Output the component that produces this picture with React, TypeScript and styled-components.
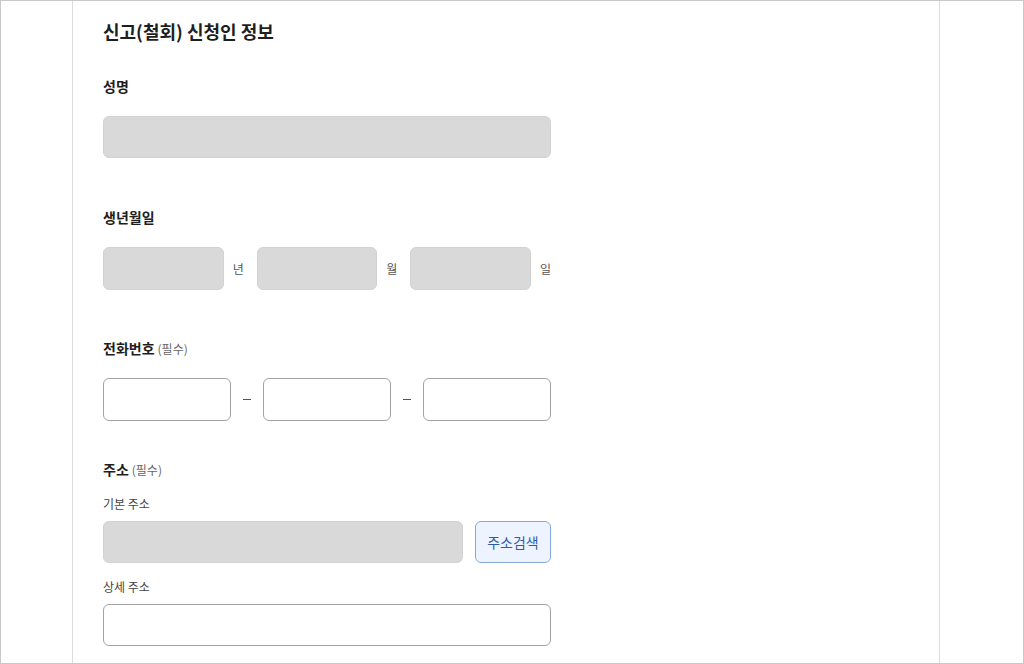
import { createGlobalStyle, styled } from "styled-components";

const GlobalStyle = createGlobalStyle`
    * { box-sizing: border-box; }
    html, body { margin: 0; padding: 0; background: #fff; }
    body {
        font-family: "Noto Sans CJK KR", "Noto Sans", sans-serif;
        color: #222;
    }
`

const Frame = styled.div`
    width: 1024px;
    height: 664px;
    border: 1px solid #c9c9c9;
    overflow: hidden;
    display: flex;
`

const Column = styled.main`
    margin-left: 71px;
    width: 868px;
    border-left: 1px solid #dcdcdc;
    border-right: 1px solid #dcdcdc;
    padding: 17px 0 0 30px;
`

const Form = styled.div`
    width: 448px;
    display: flex;
    flex-direction: column;
`

const Title = styled.h2`
    margin: 0;
    font-size: 18px;
    line-height: 26px;
    font-weight: 700;
    color: #1e1e1e;
`

const Label = styled.div<{ $top: number }>`
    margin-top: ${p => p.$top}px;
    font-size: 14px;
    line-height: 20px;
    font-weight: 700;
    color: #1e1e1e;
`

const Required = styled.span`
    margin-left: 3px;
    font-size: 12px;
    font-weight: 400;
    color: #666;
`

const SubLabel = styled.div<{ $top: number }>`
    margin-top: ${p => p.$top}px;
    font-size: 12px;
    line-height: 18px;
    color: #444;
`

const Input = styled.div<{ $disabled?: boolean; $h?: number }>`
    flex: 1;
    height: ${p => p.$h ?? 42}px;
    border-radius: 6px;
    border: 1px solid ${p => (p.$disabled ? "#d2d2d2" : "#a3a3a3")};
    background: ${p => (p.$disabled ? "#d9d9d9" : "#fff")};
    min-width: 0;
`

const Row = styled.div<{ $top: number; $cols: string; $gap: number }>`
    margin-top: ${p => p.$top}px;
    display: grid;
    grid-template-columns: ${p => p.$cols};
    column-gap: ${p => p.$gap}px;
    align-items: center;
`

const DateGroup = styled.div`
    display: flex;
    align-items: center;
    gap: 9px;
`

const Unit = styled.span`
    width: 11px;
    font-size: 12px;
    color: #555;
    text-align: center;
`

const Dash = styled.span`
    width: 8px;
    height: 1px;
    background: #555;
`

const SearchButton = styled.button`
    height: 42px;
    border-radius: 6px;
    border: 1px solid #87a9d8;
    background: #edf4ff;
    color: #2f5da5;
    font-family: inherit;
    font-size: 14px;
    padding: 0;
`

const dateUnits = ["년", "월", "일"]

const App = () => {
    return (
        <>
            <GlobalStyle />
            <Frame>
                <Column>
                    <Form>
                        <Title>신고(철회) 신청인 정보</Title>

                        <Label $top={32}>성명</Label>
                        <Row $top={20} $cols="1fr" $gap={0}>
                            <Input $disabled />
                        </Row>

                        <Label $top={49}>생년월일</Label>
                        <Row $top={20} $cols="1fr 1fr 1fr" $gap={13}>
                            {dateUnits.map(unit => (
                                <DateGroup key={unit}>
                                    <Input $disabled $h={43} />
                                    <Unit>{unit}</Unit>
                                </DateGroup>
                            ))}
                        </Row>

                        <Label $top={48}>
                            전화번호<Required>(필수)</Required>
                        </Label>
                        <Row $top={19} $cols="1fr 8px 1fr 8px 1fr" $gap={12}>
                            <Input $h={43} />
                            <Dash />
                            <Input $h={43} />
                            <Dash />
                            <Input $h={43} />
                        </Row>

                        <Label $top={38}>
                            주소<Required>(필수)</Required>
                        </Label>
                        <SubLabel $top={15}>기본 주소</SubLabel>
                        <Row $top={8} $cols="1fr 76px" $gap={12}>
                            <Input $disabled />
                            <SearchButton>주소검색</SearchButton>
                        </Row>
                        <SubLabel $top={15}>상세 주소</SubLabel>
                        <Row $top={8} $cols="1fr" $gap={0}>
                            <Input />
                        </Row>
                    </Form>
                </Column>
            </Frame>
        </>
    )
}

export default App;
